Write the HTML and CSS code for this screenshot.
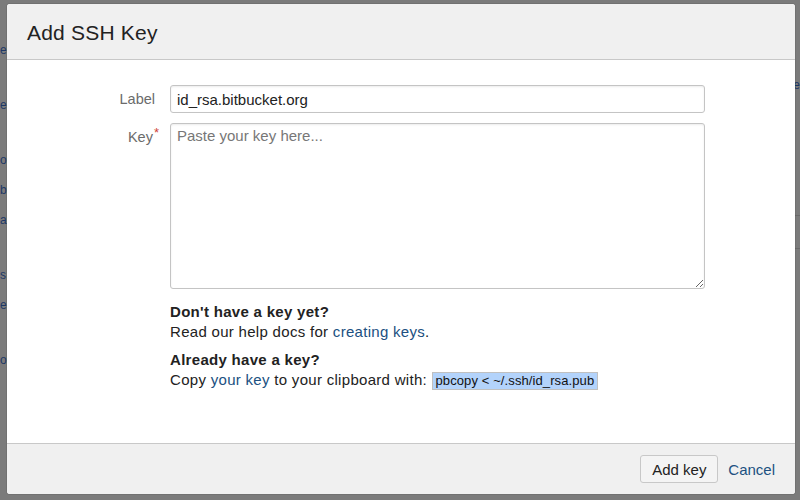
FILE: index.html
```html
<!DOCTYPE html>
<html>
<head>
<meta charset="utf-8">
<link rel="stylesheet" href="styles.css">
</head>
<body>
<div class="page">
  <div class="peek-left">
    <span class="p1">e</span>
    <span class="p2">e</span>
    <span class="p3">o</span>
    <span class="p4">b</span>
    <span class="p5">a</span>
    <span class="p6">s</span>
    <span class="p7">e</span>
    <span class="p8">o</span>
  </div>
  <div class="peek-right">
    <span class="r1">e</span>
    <div class="rline r2"></div>
    <div class="rline r3"></div>
  </div>
</div>

<div class="dialog">
  <header class="dlg-head">
    <h2 class="dlg-title">Add SSH Key</h2>
  </header>
  <div class="dlg-body">
    <div class="row">
      <label class="lbl">Label</label>
      <input class="field" type="text" value="id_rsa.bitbucket.org">
    </div>
    <div class="row">
      <label class="lbl">Key<span class="req">*</span></label>
      <textarea class="field area" placeholder="Paste your key here..."></textarea>
    </div>
    <div class="row">
      <div class="lbl"></div>
      <div class="help">
        <p class="help-title">Don't have a key yet?</p>
        <p class="help-text">Read our help docs for <a class="link" href="#">creating keys</a>.</p>
        <p class="help-title second">Already have a key?</p>
        <p class="help-text">Copy <a class="link" href="#">your key</a> to your clipboard with: <span class="code">pbcopy &lt; ~/.ssh/id_rsa.pub</span></p>
      </div>
    </div>
  </div>
  <footer class="dlg-foot">
    <button class="btn">Add key</button>
    <a class="link cancel" href="#">Cancel</a>
  </footer>
</div>
</body>
</html>
```

FILE: styles.css
```css
html, body {
  margin: 0;
  padding: 0;
  height: 100%;
}
body {
  background: #7b7b7b;
  font-family: "Liberation Sans", Arial, sans-serif;
  font-size: 14px;
  color: #333;
  overflow: hidden;
}
.page {
  display: flex;
  justify-content: space-between;
  height: 500px;
  background: #7b7b7b;
}
.peek-left {
  width: 7px;
  display: flex;
  flex-direction: column;
  align-items: flex-start;
  color: #1d3766;
  font-size: 12px;
  line-height: 16px;
}
.p1 { margin-top: 42px; }
.p2 { margin-top: 39px; }
.p3 { margin-top: 39px; }
.p4 { margin-top: 14px; }
.p5 { margin-top: 14px; }
.p6 { margin-top: 39px; }
.p7 { margin-top: 14px; }
.p8 { margin-top: 39px; }
.peek-right {
  width: 6px;
  display: flex;
  flex-direction: column;
  align-items: flex-end;
  color: #1d3766;
  font-size: 12px;
  line-height: 16px;
}
.r1 { margin-top: 77px; }
.rline { height: 1px; width: 6px; background: #6a6a6a; }
.r2 { margin-top: 122px; }
.r3 { margin-top: 32px; }

.dialog {
  position: absolute;
  left: 7px;
  top: 4px;
  width: 788px;
  height: 490px;
  background: #fff;
  border-radius: 3px;
  overflow: hidden;
  display: flex;
  flex-direction: column;
  box-shadow: 0 0 0 1px rgba(0,0,0,0.08);
}
.dlg-head {
  height: 55px;
  flex: none;
  background: #f0f0f0;
  border-bottom: 1px solid #c8c8c8;
  display: flex;
  align-items: center;
  padding-left: 20px;
}
.dlg-title {
  margin: 0;
  font-weight: normal;
  font-size: 21px;
  color: #222;
  padding-top: 2px;
  letter-spacing: 0.2px;
}
.dlg-body {
  flex: 1;
  padding-top: 25px;
  display: flex;
  flex-direction: column;
  gap: 10px;
}
.row {
  display: flex;
  align-items: flex-start;
}
.lbl {
  width: 148px;
  flex: none;
  text-align: right;
  padding-right: 15px;
  color: #6b6b6b;
  font-size: 14.5px;
  line-height: 28px;
}
.req {
  color: #d04437;
  font-size: 13px;
  vertical-align: 5px;
  line-height: 0;
  margin-left: 1px;
  margin-right: -4px;
}
.field {
  width: 535px;
  height: 28px;
  box-sizing: border-box;
  border: 1px solid #c4c4c4;
  border-radius: 3px;
  box-shadow: inset 0 1px 2px rgba(0,0,0,0.08);
  font-family: "Liberation Sans", Arial, sans-serif;
  font-size: 15px;
  color: #222;
  padding: 3px 6px;
  margin: 0;
  outline: none;
}
.area {
  height: 166px;
  resize: vertical;
  line-height: 20px;
  padding: 2px 6px;
}
.area::placeholder {
  color: #777;
}
.help {
  padding-top: 3px;
  color: #222;
}
.help p {
  margin: 0;
  line-height: 20px;
  font-size: 15px;
  letter-spacing: 0.3px;
}
.help-title {
  font-weight: bold;
}
.second {
  margin-top: 8px !important;
}
.link {
  color: #205081;
  text-decoration: none;
}
.code {
  display: inline-block;
  background: #b3d3fb;
  border: 1px solid #c0c0c0;
  font-size: 13px;
  letter-spacing: 0.1px;
  line-height: 16px;
  padding: 0 3px;
  color: #111;
}
.dlg-foot {
  height: 50px;
  flex: none;
  background: #f0f0f0;
  border-top: 1px solid #c8c8c8;
  display: flex;
  align-items: center;
  justify-content: flex-end;
  padding-right: 20px;
  gap: 10px;
}
.btn {
  height: 28px;
  width: 78px;
  box-sizing: border-box;
  background: #f4f4f4;
  border: 1px solid #c8c8c8;
  border-radius: 3px;
  font-family: "Liberation Sans", Arial, sans-serif;
  font-size: 15px;
  color: #222;
  margin: 0;
  padding: 0;
}
.cancel {
  font-size: 15px;
}
```
